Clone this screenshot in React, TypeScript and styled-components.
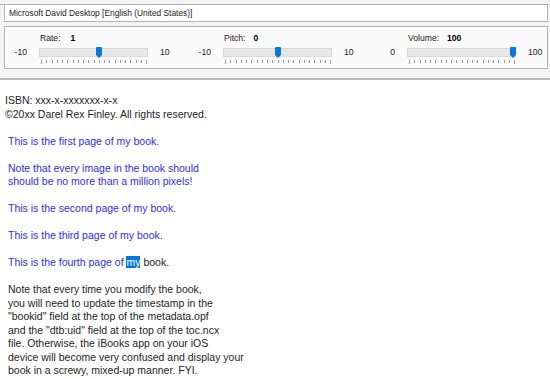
import React from "react";
import styled, { createGlobalStyle } from "styled-components";

const Global = createGlobalStyle`
  html, body { margin: 0; padding: 0; background: #ffffff; }
  body { font-family: "Liberation Sans", Arial, sans-serif; }
`;

const Window = styled.div`
  width: 550px;
  height: 379px;
  overflow: hidden;
  background: #ffffff;
`;

const Header = styled.div`
  background: #f3f3f3;
  padding: 4px 1px 0 0;
  border-bottom: 2px solid #b9b9b9;
`;

const TopRule = styled.div`
  border-top: 1px solid #b4b4b4;
  padding: 0 1px 0 4px;
`;

const VoiceBox = styled.div`
  height: 16px;
  background: #ffffff;
  border: 1px solid #b4b4b4;
  border-top: none;
  display: flex;
  align-items: center;
  padding-left: 4px;
  font-size: 8.4px;
  color: #1a1a1a;
  white-space: nowrap;
`;

const GroupBox = styled.div`
  margin: 4px 0 9px 0;
  background: #fafafa;
  border: 1px solid #b4b4b4;
  padding-top: 6px;
  box-sizing: border-box;
  height: 43px;
  display: grid;
  grid-template-columns: 184px 184px 1fr;
`;

const Slider = styled.div`
  display: grid;
  grid-template-columns: 22px 109px 1fr;
  grid-template-rows: 10px 15px 10px;
  column-gap: 12px;
  font-size: 8.6px;
  color: #1a1a1a;
`;

const LabelRow = styled.div<{ $gap: number }>`
  grid-column: 2;
  grid-row: 1;
  display: flex;
  align-items: center;
  gap: ${(p) => p.$gap}px;
  padding-left: 1px;
  line-height: 10px;
  white-space: nowrap;
`;

const Value = styled.span`
  font-weight: bold;
  color: #000;
`;

const MinLabel = styled.div`
  grid-column: 1;
  grid-row: 2;
  padding-top: 4px;
  text-align: right;
  line-height: 11px;
  white-space: nowrap;
`;

const MaxLabel = styled.div`
  grid-column: 3;
  grid-row: 2;
  padding-top: 4px;
  line-height: 11px;
  white-space: nowrap;
`;

const TrackArea = styled.div`
  grid-column: 2;
  grid-row: 2;
  margin-top: 4px;
  height: 11px;
  position: relative;
  display: flex;
  align-items: center;
`;

const Track = styled.div`
  width: 109px;
  height: 9px;
  box-sizing: border-box;
  background: #e6e8e8;
  border: 1px solid #d8d8d8;
`;

const Thumb = styled.svg`
  position: absolute;
  top: 0;
  width: 6px;
  height: 11px;
`;

const Ticks = styled.svg`
  grid-column: 2;
  grid-row: 3;
  margin-top: 2px;
  width: 109px;
  height: 4px;
  display: block;
`;

const Content = styled.div`
  padding: 14px 0 0 0;
  font-size: 10.5px;
  line-height: 13.5px;
  color: #1e1e1e;
`;

const Para = styled.p<{ $indent: number; $blue?: boolean }>`
  margin: 0 0 13.5px 0;
  padding-left: ${(p) => p.$indent}px;
  color: ${(p) => (p.$blue ? "#2f2cf0" : "#1e1e1e")};
  white-space: nowrap;
`;

const Black = styled.span`
  color: #1e1e1e;
`;

const Selected = styled.span`
  background: #0078d7;
  color: #ffffff;
`;

type SliderProps = {
  label: string;
  value: number;
  min: number;
  max: number;
  gap: number;
};

const TrackSlider = ({ label, value, min, max, gap }: SliderProps) => {
  const frac = (value - min) / (max - min);
  const left = frac * 103;
  return (
    <Slider>
      <LabelRow $gap={gap}>
        <span>{label}</span>
        <Value>{value}</Value>
      </LabelRow>
      <MinLabel>{min}</MinLabel>
      <TrackArea>
        <Track />
        <Thumb style={{ left: `${left}px` }} viewBox="0 0 6 11">
          <path d="M0 1 Q0 0 1 0 H5 Q6 0 6 1 V8 L3 11 L0 8 Z" fill="#0a78d7" />
        </Thumb>
      </TrackArea>
      <MaxLabel>{max}</MaxLabel>
      <Ticks viewBox="0 0 109 4">
        {Array.from({ length: 21 }).map((_, i) => {
          const x = Math.round(2 + i * 5.25) + 0.5;
          const end = i === 0 || i === 20;
          return (
            <line
              key={i}
              x1={x}
              x2={x}
              y1={0}
              y2={end ? 4 : 3}
              stroke="#9a9a9a"
              strokeWidth={1}
            />
          );
        })}
      </Ticks>
    </Slider>
  );
};

export default function App() {
  return (
    <Window>
      <Global />
      <Header>
        <TopRule>
          <VoiceBox>Microsoft David Desktop [English (United States)]</VoiceBox>
          <GroupBox>
            <TrackSlider label="Rate:" value={1} min={-10} max={10} gap={10} />
            <TrackSlider label="Pitch:" value={0} min={-10} max={10} gap={8} />
            <TrackSlider label="Volume:" value={100} min={0} max={100} gap={8} />
          </GroupBox>
        </TopRule>
      </Header>
      <Content>
        <Para $indent={5}>
          ISBN: xxx-x-xxxxxxx-x-x
          <br />
          ©20xx Darel Rex Finley. All rights reserved.
        </Para>
        <Para $indent={8} $blue>
          This is the first page of my book.
        </Para>
        <Para $indent={8} $blue>
          Note that every image in the book should
          <br />
          should be no more than a million pixels!
        </Para>
        <Para $indent={8} $blue>
          This is the second page of my book.
        </Para>
        <Para $indent={8} $blue>
          This is the third page of my book.
        </Para>
        <Para $indent={8} $blue>
          This is the fourth page of <Selected>my</Selected>
          <Black> book.</Black>
        </Para>
        <Para $indent={8}>
          Note that every time you modify the book,
          <br />
          you will need to update the timestamp in the
          <br />
          "bookid" field at the top of the metadata.opf
          <br />
          and the "dtb:uid" field at the top of the toc.ncx
          <br />
          file. Otherwise, the iBooks app on your iOS
          <br />
          device will become very confused and display your
          <br />
          book in a screwy, mixed-up manner. FYI.
        </Para>
      </Content>
    </Window>
  );
}
